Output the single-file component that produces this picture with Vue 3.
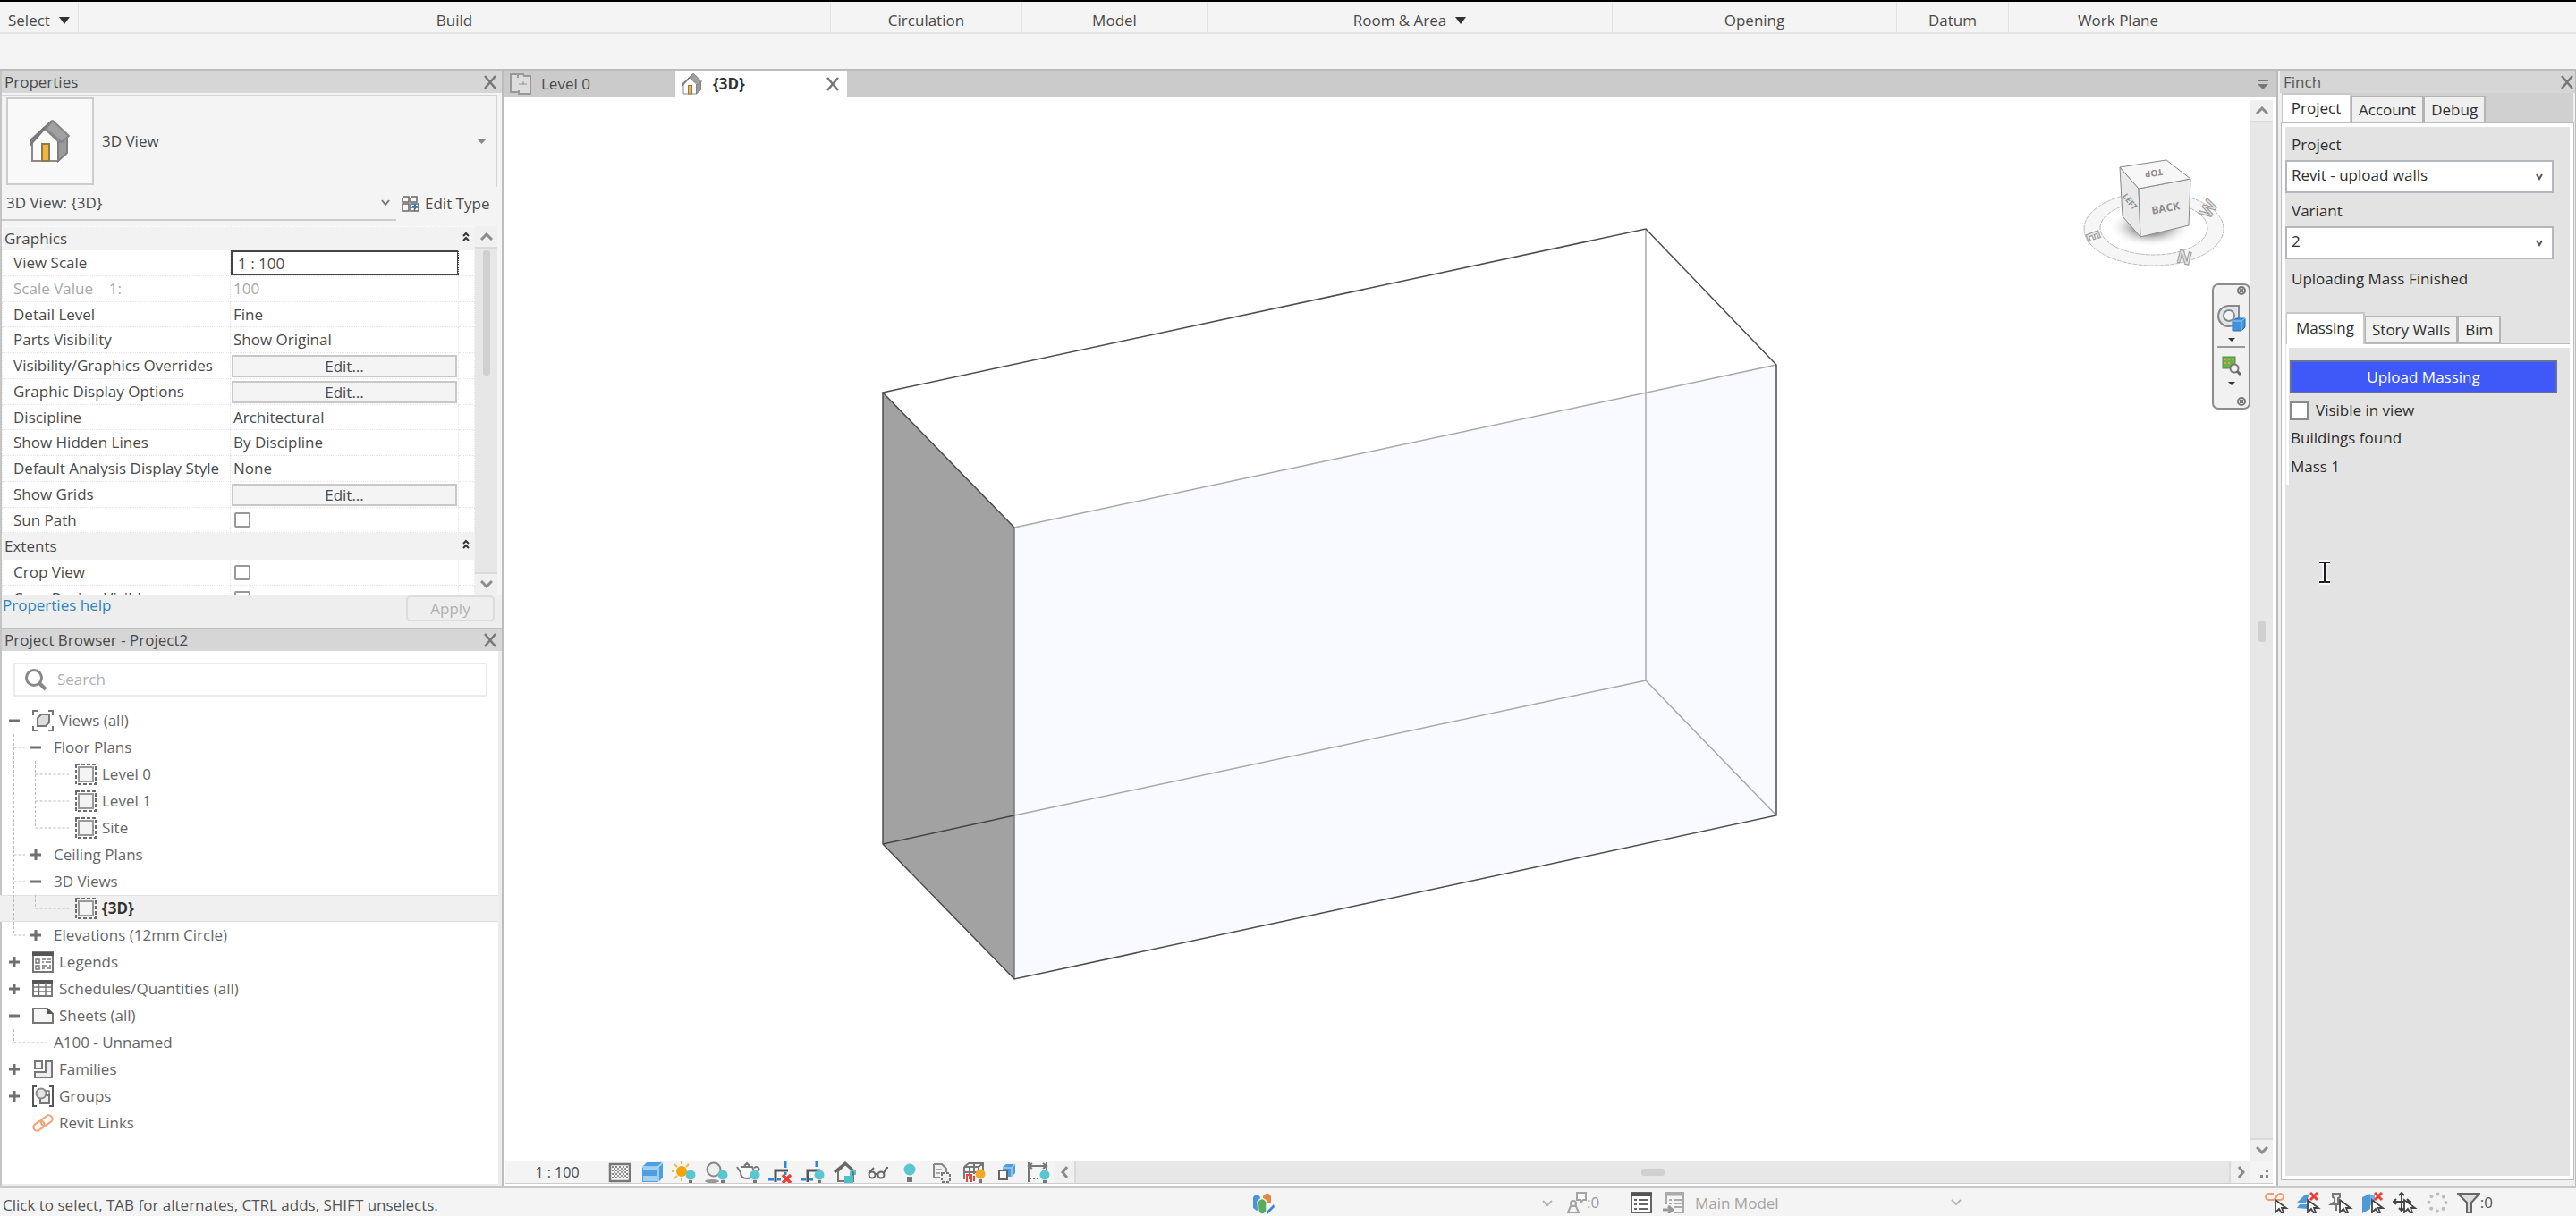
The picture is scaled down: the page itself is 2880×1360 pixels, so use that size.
<script setup>
import { ref } from 'vue'

const ribbon = [
  { name: 'Select', width: 88, menu: true, start: true },
  { name: 'Build', width: 841 },
  { name: 'Circulation', width: 214 },
  { name: 'Model', width: 207 },
  { name: 'Room & Area', width: 453, menu: true },
  { name: 'Opening', width: 318 },
  { name: 'Datum', width: 125 },
  { name: 'Work Plane', width: 244, last: true },
]

const groups = [
  {
    name: 'Graphics',
    rows: [
      { label: 'View Scale', kind: 'field', value: '1 : 100' },
      { label: 'Scale Value    1:', kind: 'text', value: '100', dim: true },
      { label: 'Detail Level', kind: 'text', value: 'Fine' },
      { label: 'Parts Visibility', kind: 'text', value: 'Show Original' },
      { label: 'Visibility/Graphics Overrides', kind: 'button', value: 'Edit...' },
      { label: 'Graphic Display Options', kind: 'button', value: 'Edit...' },
      { label: 'Discipline', kind: 'text', value: 'Architectural' },
      { label: 'Show Hidden Lines', kind: 'text', value: 'By Discipline' },
      { label: 'Default Analysis Display Style', kind: 'text', value: 'None' },
      { label: 'Show Grids', kind: 'button', value: 'Edit...' },
      { label: 'Sun Path', kind: 'check' },
    ],
  },
  {
    name: 'Extents',
    rows: [
      { label: 'Crop View', kind: 'check' },
      { label: 'Crop Region Visible', kind: 'check' },
    ],
  },
]

const HOUSE = '<path d="M3 24v22h29V24L16 9z" fill="#fbfbfb" stroke="#8a8a8a" stroke-width="2"/><path d="M32 26l10-7v18l-10 9z" fill="#9b9b9b" stroke="#808080" stroke-width="2"/><path d="M25 1L1 23v5l15-17z" fill="#8a8a8a" stroke="#777" stroke-width="2"/><path d="M26 1l18 17-8 7L18 10z" fill="#a0a0a0" stroke="#858585" stroke-width="2"/><rect x="14" y="27" width="8" height="19" fill="#f3b33d" stroke="#8d7a4e" stroke-width="2"/>'

const PLAN = '<rect x="1" y="1" width="22" height="22" fill="none" stroke="#6c6c6c" stroke-width="2" stroke-dasharray="4 2"/><rect x="4" y="4" width="16" height="16" fill="#f4f4f4" stroke="#999" stroke-width="2"/>'

const tree = [
  { text: 'Views (all)', indent: 10, toggle: '-', icon: '<path d="M1 6V1h5M18 1h5v5M1 18v5h5M18 23h5v-5" fill="none" stroke="#777" stroke-width="2"/><path d="M6 9l4-4h9v9l-4 4H6z" fill="#ddd" stroke="#777" stroke-width="2"/>' },
  { text: 'Floor Plans', indent: 34, toggle: '-', guide: 'M15.5 0V30M15.5 15H28' },
  { text: 'Level 0', indent: 84, icon: PLAN, guide: 'M15.5 0V30M39.5 0V30M39.5 15H77' },
  { text: 'Level 1', indent: 84, icon: PLAN, guide: 'M15.5 0V30M39.5 0V30M39.5 15H77' },
  { text: 'Site', indent: 84, icon: PLAN, guide: 'M15.5 0V30M39.5 0V15H77' },
  { text: 'Ceiling Plans', indent: 34, toggle: '+', guide: 'M15.5 0V30M15.5 15H28' },
  { text: '3D Views', indent: 34, toggle: '-', guide: 'M15.5 0V30M15.5 15H28' },
  { text: '{3D}', indent: 84, icon: PLAN, guide: 'M15.5 0V30M39.5 0V15H77', selected: true },
  { text: 'Elevations (12mm Circle)', indent: 34, toggle: '+', guide: 'M15.5 0V15H28' },
  { text: 'Legends', indent: 10, toggle: '+', icon: '<rect x="1" y="1" width="22" height="22" fill="#fff" stroke="#777" stroke-width="2"/><path d="M0 3h24" stroke="#555" stroke-width="4"/><path d="M4 9h4v4H4zM4 16h4v4H4z" fill="none" stroke="#777" stroke-width="1.5"/><path d="M11 9h4M17 9h4M11 12h2M15 12h6M11 16h6M19 16h2M11 19h3M16 19h5" stroke="#777" stroke-width="1.5"/>' },
  { text: 'Schedules/Quantities (all)', indent: 10, toggle: '+', icon: '<rect x="1" y="3" width="21" height="17" fill="#fff" stroke="#777" stroke-width="2"/><path d="M0 4h23" stroke="#555" stroke-width="4"/><path d="M1 10h21M1 15h21M7.5 5v15M15 5v15" stroke="#777" stroke-width="1.5"/>' },
  { text: 'Sheets (all)', indent: 10, toggle: '-', icon: '<path d="M1 4h16l6 6v10H1z" fill="#f6f6f6" stroke="#777" stroke-width="2"/><path d="M16 3v7h8z" fill="#555"/>' },
  { text: 'A100 - Unnamed', indent: 60, guide: 'M15.5 0V15H53' },
  { text: 'Families', indent: 10, toggle: '+', icon: '<rect x="3" y="3" width="8" height="8" fill="#f4f4f4" stroke="#777" stroke-width="2"/><path d="M15 3h7v18H3v-6h12z" fill="#eee" stroke="#777" stroke-width="2"/>' },
  { text: 'Groups', indent: 10, toggle: '+', icon: '<path d="M5 1H1v22h4M19 1h4v22h-4" fill="none" stroke="#555" stroke-width="2"/><rect x="9" y="11" width="10" height="9" fill="#eee" stroke="#777" stroke-width="2"/><circle cx="10" cy="9" r="5.5" fill="#e4e4e4" stroke="#888" stroke-width="2"/><path d="M15 6h4v6" stroke="#777" stroke-width="1.5" fill="none"/>' },
  { text: 'Revit Links', indent: 36, icon: '<g fill="none" stroke="#eda77c" stroke-width="2.2" transform="rotate(-35 12 12)"><rect x="0" y="8" width="13" height="8" rx="4"/><rect x="10" y="8" width="14" height="8" rx="4"/></g>' },
]

const BULB = '<circle cx="21" cy="15" r="5.5" fill="#5cc6d0"/><rect x="19" y="21" width="4" height="3" fill="#777"/>'

const viewControls = [
  { name: 'Detail level', art: '<rect x="3" y="3" width="22" height="19" fill="#f4f4f4" stroke="#777" stroke-width="2.5"/><path d="M5 6h18M5 10h18M5 14h18M5 18h18" stroke="#888" stroke-width="2" stroke-dasharray="2 2"/><path d="M7 8h16M7 12h16M7 16h16" stroke="#999" stroke-width="2" stroke-dasharray="2 2"/>' },
  { name: 'Visual style', art: '<path d="M3 6l5-5h18v17l-5 5H3z" fill="#4d9fe0"/><path d="M3 6h18l5-5M21 6v17" stroke="#b8dcf6" fill="none" stroke-width="1.5"/><path d="M4 7h16v3H4zM4 16h16v6H4z" fill="#a4d0f2"/>' },
  { name: 'Sun path', art: '<circle cx="11" cy="11" r="6" fill="#f5a30c"/><g stroke="#f3b652" stroke-width="2"><path d="M11 0v3M11 19v3M0 11h3M3 3l3 3M19 3l-3 3M3 19l3-3"/></g>' + BULB },
  { name: 'Shadows', art: '<ellipse cx="9" cy="22" rx="8" ry="2" fill="#999"/><circle cx="11" cy="9" r="7.5" fill="#eee" stroke="#888" stroke-width="2"/>' + BULB },
  { name: 'Rendering dialog', art: '<path d="M6 6h12l2 5c0 5-3 8-8 8s-7-3-7-7L1 6M20 7c5-3 7 2 4 4M9 5l3-3 3 3" fill="#fafafa" stroke="#777" stroke-width="2"/>' + BULB },
  { name: 'Crop view', art: '<path d="M8 23V10h14" fill="none" stroke="#555" stroke-width="3"/><path d="M19 0v7M19 12v3M0 20h6M10 20h4" stroke="#2f86d8" stroke-width="3"/><path d="M16 15l9 9M25 15l-9 9" stroke="#ee3b33" stroke-width="3.5"/>' },
  { name: 'Crop region', art: '<path d="M8 23V10h14" fill="none" stroke="#555" stroke-width="3"/><path d="M18 0v6M0 20h6M10 20h4" stroke="#2f86d8" stroke-width="3"/>' + BULB },
  { name: 'Lock view', art: '<path d="M6 11v11h17V11l-9-8z" fill="#f4f4f4" stroke="#777" stroke-width="2"/><path d="M2 12L14 2l11 10" fill="none" stroke="#666" stroke-width="3"/><rect x="13" y="16" width="10" height="8" fill="#4fbfca"/><path d="M20 16v-3c0-4 5-4 5 0v2" fill="none" stroke="#4fbfca" stroke-width="2"/>' },
  { name: 'Temporary hide', art: '<g fill="none" stroke="#666" stroke-width="2"><circle cx="8" cy="15" r="3.5"/><circle cx="18" cy="15" r="3.5"/><path d="M4 13l6-6M11 14h4M21 13l3-6h2"/></g>' },
  { name: 'Reveal hidden', art: '<circle cx="14" cy="9" r="6.5" fill="#5cc6d0"/><rect x="11" y="17" width="6" height="6" fill="#777"/>' },
  { name: 'Temporary view properties', art: '<path d="M5 3h9l5 5v4M12 18H5V3" fill="#eee" stroke="#888" stroke-width="2"/><path d="M8 9h6M8 13h4" stroke="#aaa" stroke-width="2"/><path d="M14 13h9v10h-9z" fill="#eee" stroke="#777" stroke-width="2" stroke-dasharray="3 2"/>' },
  { name: 'Analytical model', art: '<path d="M3 6l5-4h16v12M3 6v14M3 6h16l5-4M9 6v14M19 6v9M3 12h18M14 2v12" fill="none" stroke="#777" stroke-width="2"/><path d="M6 23v-8h5v8M14 22v-6" fill="none" stroke="#e8453c" stroke-width="2"/><circle cx="21" cy="14" r="5.5" fill="#f2a62a"/><rect x="19" y="20" width="4" height="4" fill="#777"/>' },
  { name: 'Displacement sets', art: '<path d="M10 6l4-3h10v10l-4 4H10z" fill="#4d9fe0"/><path d="M10 7h10v10M20 7l4-4" stroke="#9fcdf0" stroke-width="1.5" fill="none"/><rect x="6" y="10" width="9" height="10" fill="#fff" stroke="#666" stroke-width="2"/>' },
  { name: 'Reveal constraints', art: '<path d="M3 1v22M23 1v9M3 5h20M7 2L3 5l4 3M19 2l4 3-4 3" fill="none" stroke="#777" stroke-width="2"/><path d="M4 19h11" stroke="#777" stroke-width="2" stroke-dasharray="2 2"/>' + BULB },
]

const ARROW = '<path d="M13 9v14l4-4 3 5 2-1-2-5h5z" fill="#fff" stroke="#444" stroke-width="1.8"/>'
const CROSS = '<path d="M16 1l8 8M24 1l-8 8" stroke="#ee3b33" stroke-width="3"/>'

const selectionTools = [
  { name: 'Select links', art: '<path d="M11 2H6a4 3.5 0 000 7h4c4 0 4-7 8-7a4 3.5 0 010 7h-4" fill="none" stroke="#ee9d6c" stroke-width="2"/>' + ARROW },
  { name: 'Select underlay elements', art: '<path d="M1 12L10 3h5l-4 9zM1 18l3-4h9v5z" fill="#4d9ad6"/>' + CROSS + ARROW },
  { name: 'Select pinned elements', art: '<path d="M4 2h10M5 2v4l2 1v4l-4 3h12l-4-3V7l2-1V2M9 14v7" fill="#eee" stroke="#777" stroke-width="2"/>' + ARROW },
  { name: 'Select elements by face', art: '<path d="M2 6l9-4v17l-9 5z" fill="#4d9ad6"/><path d="M11 3h5v12h-5z" fill="#6cb2e6"/>' + CROSS + ARROW },
  { name: 'Drag elements on selection', art: '<path d="M10 2v18M1 11h18M7 4l3-3 3 3M7 18l3 3 3-3M4 8l-3 3 3 3M16 8l3 3-3 3" fill="none" stroke="#444" stroke-width="2"/>' + ARROW },
  { name: 'Background processes', art: '<circle cx="14" cy="12" r="9.5" fill="none" stroke="#bcbcbc" stroke-width="4" stroke-dasharray="0.1 7.36" stroke-linecap="round"/>' },
]

const finchTabs = ['Project', 'Account', 'Debug']
const massTabs = ['Massing', 'Story Walls', 'Bim']
const project = ref('Revit - upload walls')
const variant = ref('2')
const visible = ref(false)
</script>

<template>
  <div class="app">
    <header class="ribbon">
      <div class="ribbon-panels">
        <div
          v-for="p in ribbon"
          :key="p.name"
          class="ribbon-panel"
          :class="{ start: p.start, last: p.last }"
          :style="{ flexBasis: p.width + 'px' }"
        >
          <span>{{ p.name }}</span>
          <svg v-if="p.menu" class="caret" width="12" height="8" viewBox="0 0 12 8"><path d="M0 0h12L6 8z" fill="#333" /></svg>
        </div>
      </div>
      <div class="options-bar"></div>
    </header>

    <main class="workspace">
      <aside class="left">
        <section class="properties">
          <div class="palette-title">
            <h2>Properties</h2>
            <button class="close" aria-label="Close Properties"><svg width="14" height="16" viewBox="0 0 14 16"><path d="M1 1l12 14M13 1L1 15" /></svg></button>
          </div>
          <button class="type-selector">
            <span class="type-thumb">
              <svg width="46" height="48" viewBox="0 0 46 48" v-html="HOUSE"></svg>
            </span>
            <span class="type-name">3D View</span>
            <svg width="11" height="6" viewBox="0 0 11 6"><path d="M0 0h11L5.5 6z" fill="#888" /></svg>
          </button>
          <div class="instance">
            <div class="instance-pick">
              <select aria-label="Instance"><option>3D View: {3D}</option></select>
              <svg width="10" height="8" viewBox="0 0 10 8"><path d="M1 1l4 5 4-5" fill="none" stroke="#777" stroke-width="2" /></svg>
            </div>
            <button class="edit-type">
              <svg width="20" height="20" viewBox="0 0 20 20"><path d="M2 2h6v6H1V4zM11 2h6v6h-7V4zM1 10h7v8H1zM10 10h9v8h-9zM10 14h9M14.5 10v8" fill="#f8f8f8" stroke="#666" stroke-width="1.5" /><path d="M12 13h6M15 10v6" stroke="#2f7fd0" stroke-width="2" /></svg>
              Edit Type
            </button>
          </div>
          <div class="grid-area">
            <table class="grid">
              <colgroup><col class="c-name" /><col class="c-value" /><col /></colgroup>
              <tbody v-for="g in groups" :key="g.name">
                <tr class="group">
                  <th colspan="2" scope="rowgroup">{{ g.name }}</th>
                  <td><svg width="8" height="11" viewBox="0 0 8 11"><path d="M1 5l3-3 3 3M1 10l3-3 3 3" fill="none" stroke="#333" stroke-width="2" /></svg></td>
                </tr>
                <tr v-for="(r, i) in g.rows" :key="r.label" :class="{ dim: r.dim }">
                  <th scope="row"><label :for="g.name + i">{{ r.label }}</label></th>
                  <td>
                    <input v-if="r.kind === 'field'" :id="g.name + i" class="field" :value="r.value" />
                    <button v-else-if="r.kind === 'button'" :id="g.name + i" class="edit">{{ r.value }}</button>
                    <input v-else-if="r.kind === 'check'" :id="g.name + i" type="checkbox" class="tick" />
                    <output v-else :id="g.name + i">{{ r.value }}</output>
                  </td>
                  <td></td>
                </tr>
              </tbody>
            </table>
            <div class="vbar">
              <span class="vbtn"><svg width="14" height="9" viewBox="0 0 14 9"><path d="M1 8l6-6 6 6" /></svg></span>
              <span class="vtrack"><i class="long"></i></span>
              <span class="vbtn down"><svg width="14" height="9" viewBox="0 0 14 9"><path d="M1 1l6 6 6-6" /></svg></span>
            </div>
          </div>
          <div class="properties-foot">
            <a href="#help">Properties help</a>
            <button class="apply" disabled>Apply</button>
          </div>
        </section>

        <section class="browser">
          <div class="palette-title">
            <h2>Project Browser - Project2</h2>
            <button class="close" aria-label="Close Project Browser"><svg width="14" height="16" viewBox="0 0 14 16"><path d="M1 1l12 14M13 1L1 15" /></svg></button>
          </div>
          <label class="search">
            <svg width="26" height="26" viewBox="0 0 26 26"><circle cx="11" cy="11" r="8.5" fill="none" stroke="#888" stroke-width="3" /><path d="M17 17l7 7" stroke="#888" stroke-width="4" /></svg>
            <input type="search" placeholder="Search" aria-label="Search" />
          </label>
          <ul class="tree">
            <li v-for="n in tree" :key="n.text" :class="{ selected: n.selected }">
              <svg :width="n.indent" height="30" class="guides"><path v-if="n.guide" :d="n.guide" fill="none" stroke="#bbb" stroke-dasharray="3 2" /></svg>
              <svg v-if="n.toggle" class="toggle" width="12" height="12" viewBox="0 0 12 12"><path :d="n.toggle === '+' ? 'M0 6h12M6 0v12' : 'M0 6h12'" stroke="#707070" stroke-width="3" /></svg>
              <svg v-if="n.icon" class="node-icon" width="24" height="24" viewBox="0 0 24 24" v-html="n.icon"></svg>
              <span>{{ n.text }}</span>
            </li>
          </ul>
        </section>
      </aside>

      <section class="center">
        <nav class="doc-tabs">
          <button class="doc-tab">
            <svg width="24" height="24" viewBox="0 0 24 24"><path d="M1 1h8v3h6v17H1z" fill="#ddd" stroke="#999" stroke-width="2" /><path d="M10 1h5l1 2h7v20H10v-4" fill="#ddd" stroke="#999" stroke-width="2" /><path d="M10 12h9M15 9v4" stroke="#999" /></svg>
            <span>Level 0</span>
          </button>
          <div class="doc-tab active">
            <svg width="24" height="24" viewBox="0 0 46 48" v-html="HOUSE"></svg>
            <span>{3D}</span>
            <button class="close" aria-label="Close view"><svg width="14" height="16" viewBox="0 0 14 16"><path d="M1 1l12 14M13 1L1 15" /></svg></button>
          </div>
          <svg class="tab-menu" width="12" height="12" viewBox="0 0 12 12"><path d="M0 1h12" stroke="#777" stroke-width="2" /><path d="M0 5h12l-6 6z" fill="#777" /></svg>
        </nav>

        <div class="view-row">
          <div class="canvas">
            <svg class="model" viewBox="563 109 1953 1189">
              <path d="M987 439L1840 256 1986 408 1134 590z" fill="#fff" />
              <path d="M1134 590L1986 408V912L1134 1095z" fill="#f8faff" />
              <path d="M987 439L1134 590V1095L987 944z" fill="#a2a2a3" />
              <path d="M1134 590L1986 408M1840 256V761L1986 912M1840 761L1134 912" fill="none" stroke="#a9a9a9" stroke-width="1.5" />
              <path d="M1134 590V1095" stroke="#777" stroke-width="1.5" />
              <path d="M1134 912L987 944" stroke="#444" stroke-width="1.5" />
              <path d="M1134 590L987 439 1840 256 1986 408V912L1134 1095 987 944V439" fill="none" stroke="#4c4c4c" stroke-width="1.5" />
            </svg>

            <svg class="cube" width="172" height="130" viewBox="2320 176 172 130">
              <defs>
                <radialGradient id="cube-shade"><stop offset="0.4" stop-color="#777" stop-opacity="0.7" /><stop offset="1" stop-color="#fff" stop-opacity="0" /></radialGradient>
              </defs>
              <path d="M2330 256a78 41 0 10156 0a78 41 0 10-156 0zM2348 255a60 30 0 11120 0a60 30 0 11-120 0z" fill="#f6f6f6" fill-rule="evenodd" stroke="#bbb" stroke-dasharray="5 1" />
              <ellipse cx="2404" cy="254" rx="46" ry="22" fill="url(#cube-shade)" />
              <path d="M2370 187L2391 211 2393 265 2373 242z" fill="#e9e9e9" stroke="#888" />
              <path d="M2391 211L2449 200 2447 252 2393 265z" fill="#ededed" stroke="#888" />
              <path d="M2370 187L2422 179 2449 200 2391 211z" fill="#f7f7f7" stroke="#888" />
              <g font-weight="700" fill="#8c8c8c" text-anchor="middle">
                <text x="2421" y="237" font-size="12" transform="rotate(-10 2421 232)">BACK</text>
                <text x="2408" y="198" font-size="10" transform="rotate(172 2408 194)">TOP</text>
                <text x="2382" y="229" font-size="9" transform="rotate(52 2382 225)">LEFT</text>
              </g>
              <g font-weight="700" fill="#e4e4e4" stroke="#999" font-size="20" text-anchor="middle">
                <text x="2442" y="295" transform="rotate(14 2442 288)">N</text>
                <text x="2470" y="240" transform="rotate(-60 2470 234)">W</text>
                <text x="2340" y="271" transform="rotate(70 2340 264)">E</text>
              </g>
            </svg>

            <div class="navbar">
              <svg class="nav-dot" width="10" height="10" viewBox="0 0 10 10"><circle cx="5" cy="5" r="4" /><path d="M3 3l4 4M7 3L3 7" /></svg>
              <button aria-label="Steering wheel">
                <svg width="32" height="30" viewBox="0 0 32 30"><path d="M13 1h11v12a11.5 11.5 0 11-11-12z" fill="#dfe5ea" stroke="#888" stroke-width="2" /><circle cx="13" cy="12" r="6" fill="#f4f4f4" stroke="#888" stroke-width="2" /><path d="M17 18l4-3h10v10l-4 4H17z" fill="#3f92dc" stroke="#2b6fb4" /><path d="M17 18h10v11M27 18l4-3" stroke="#9fd0f5" fill="none" /></svg>
              </button>
              <svg class="mini" width="8" height="4" viewBox="0 0 8 4"><path d="M0 0h8L4 4z" fill="#333" /></svg>
              <hr />
              <button aria-label="Zoom region">
                <svg width="22" height="22" viewBox="0 0 22 22"><rect x="1" y="1" width="14" height="13" fill="#6fb04e" stroke="#4d9148" /><path d="M3 4h10M3 8h8" stroke="#d8a84a" stroke-width="2" stroke-dasharray="2 2" /><circle cx="14" cy="14" r="4.5" fill="#eef3f6" stroke="#777" stroke-width="2" /><path d="M17 17l4 4" stroke="#666" stroke-width="3" /></svg>
              </button>
              <svg class="mini" width="8" height="4" viewBox="0 0 8 4"><path d="M0 0h8L4 4z" fill="#333" /></svg>
              <svg class="nav-dot end" width="10" height="10" viewBox="0 0 10 10"><circle cx="5" cy="5" r="4" /><path d="M3 4h4M3 6h4" /></svg>
            </div>
          </div>
          <div class="vbar">
            <span class="vbtn"><svg width="14" height="9" viewBox="0 0 14 9"><path d="M1 8l6-6 6 6" /></svg></span>
            <span class="vtrack mid"><i></i></span>
            <span class="vbtn down"><svg width="14" height="9" viewBox="0 0 14 9"><path d="M1 1l6 6 6-6" /></svg></span>
          </div>
        </div>

        <div class="view-bar">
          <button class="scale">1 : 100</button>
          <button v-for="c in viewControls" :key="c.name" class="vc" :aria-label="c.name"><svg width="28" height="24" viewBox="0 0 28 24" v-html="c.art"></svg></button>
          <div class="hbar">
            <span class="hbtn"><svg width="9" height="14" viewBox="0 0 9 14"><path d="M7 1L2 7l5 6" /></svg></span>
            <span class="htrack"><i></i></span>
            <span class="hbtn right"><svg width="9" height="14" viewBox="0 0 9 14"><path d="M2 1l5 6-5 6" /></svg></span>
          </div>
          <svg class="grip" width="25" height="25" viewBox="0 0 25 25"><path d="M17 10h3v3h-3zM17 16h3v3h-3zM11 16h3v3h-3z" fill="#888" /></svg>
        </div>
      </section>

      <aside class="finch">
        <div class="palette-title">
          <h2>Finch</h2>
          <button class="close" aria-label="Close Finch"><svg width="14" height="16" viewBox="0 0 14 16"><path d="M1 1l12 14M13 1L1 15" /></svg></button>
        </div>
        <div class="tabs outer">
          <button v-for="(t, i) in finchTabs" :key="t" :class="{ on: i === 0 }">{{ t }}</button>
        </div>
        <div class="finch-body">
          <label class="caption" for="project">Project</label>
          <div class="combo">
            <select id="project" v-model="project"><option>Revit - upload walls</option></select>
            <svg width="8" height="8" viewBox="0 0 8 8"><path d="M1 1l3 5 3-5" fill="none" stroke="#555" stroke-width="2" /></svg>
          </div>
          <label class="caption" for="variant">Variant</label>
          <div class="combo">
            <select id="variant" v-model="variant"><option>2</option></select>
            <svg width="8" height="8" viewBox="0 0 8 8"><path d="M1 1l3 5 3-5" fill="none" stroke="#555" stroke-width="2" /></svg>
          </div>
          <p class="status-text">Uploading Mass Finished</p>
          <div class="tabs inner">
            <button v-for="(t, i) in massTabs" :key="t" :class="{ on: i === 0 }">{{ t }}</button>
          </div>
          <div class="massing">
            <button class="upload">Upload Massing</button>
            <label class="visible"><input v-model="visible" type="checkbox" class="box" /> Visible in view</label>
            <p>Buildings found</p>
            <p>Mass 1</p>
          </div>
          <svg class="ibeam" width="16" height="30" viewBox="0 0 16 30"><path d="M2 4h5l1 1 1-1h5M8 5v20M2 26h5l1-1 1 1h5" fill="none" stroke="#fff" stroke-width="5" /><path d="M2 4h5l1 1 1-1h5M8 5v20M2 26h5l1-1 1 1h5" fill="none" stroke="#1b1b28" stroke-width="2" /></svg>
        </div>
      </aside>
    </main>

    <footer class="status">
      <p class="hint">Click to select, TAB for alternates, CTRL adds, SHIFT unselects.</p>
      <div class="workset">
        <svg width="26" height="24" viewBox="0 0 26 24"><path d="M1 5q4-6 8 0v13l-4 2-4-3z" fill="#4d94d6" /><path d="M12 4q5-7 9 0v8h-9z" fill="#e08a44" /><path d="M17 20l7-7 1 3-9 9z" fill="#3b86cf" /><path d="M6 10q5-7 10 0v11q-5 6-9 0z" fill="#58ad5c" stroke="#e8f0e8" stroke-width="1.5" /></svg>
        <svg class="chev" width="12" height="8" viewBox="0 0 12 8"><path d="M1 1l5 5 5-5" /></svg>
      </div>
      <div class="requests">
        <svg width="22" height="24" viewBox="0 0 22 24"><path d="M11 1h10v8h-3l-3 3V9h-4z" fill="#f8f8f8" stroke="#a4a4a4" stroke-width="2" /><circle cx="7" cy="13" r="3" fill="none" stroke="#a4a4a4" stroke-width="2" /><path d="M1 23l3-7h6l3 7z" fill="none" stroke="#a4a4a4" stroke-width="2" /></svg>
        <span>:0</span>
      </div>
      <div class="design">
        <svg width="24" height="24" viewBox="0 0 24 24"><rect x="1" y="1" width="22" height="22" fill="#fff" stroke="#666" stroke-width="2" /><path d="M0 3h24" stroke="#555" stroke-width="4" /><path d="M4 9h3M4 14h3M4 19h3M9 9h11M9 14h11M9 19h11" stroke="#666" stroke-width="2" /></svg>
        <svg width="24" height="24" viewBox="0 0 24 24"><path d="M4 14V1h19v22H12" fill="#f4f4f4" stroke="#aaa" stroke-width="2" /><path d="M3 3h21" stroke="#aaa" stroke-width="3" /><path d="M7 9h3M7 13h3M12 9h9M12 13h9M12 17h9" stroke="#aaa" stroke-width="2" /><path d="M0 20h8M6 16l5 4-5 4" stroke="#999" stroke-width="3" fill="none" /></svg>
        <label class="option"><select aria-label="Design option" disabled><option>Main Model</option></select>
          <svg class="chev" width="12" height="8" viewBox="0 0 12 8"><path d="M1 1l5 5 5-5" /></svg></label>
      </div>
      <div class="tools">
        <button v-for="t in selectionTools" :key="t.name" :aria-label="t.name"><svg width="28" height="24" viewBox="0 0 28 24" v-html="t.art"></svg></button>
        <button class="filter" aria-label="Filter"><svg width="26" height="24" viewBox="0 0 26 24"><path d="M1 2h24L16 12v11h-5V12z" fill="#ddd" stroke="#666" stroke-width="2" /></svg><span>:0</span></button>
      </div>
    </footer>
  </div>
</template>

<style>
body {
  margin: 0;
}
</style>

<style scoped>
.app {
  display: flex;
  flex-direction: column;
  min-height: 100vh;
  background: #f4f4f4;
  color: #4a4a4a;
  font: 17px/24px "Open Sans", "Noto Sans", sans-serif;
}
*, *::before, *::after { box-sizing: border-box; }
h2, p, ul { margin: 0; padding: 0; font-size: inherit; font-weight: 400; list-style: none; }
button, input, select {
  margin: 0; padding: 0; border: 0; border-radius: 0; background: none;
  color: inherit; font: inherit; appearance: none;
}
svg { display: block; flex: none; }

.ribbon { border-top: 2px solid #000; border-bottom: 2px solid #bcbcbc; }
.ribbon-panels { display: flex; height: 36px; border-bottom: 2px solid #e4e4e4; }
.ribbon-panel {
  display: flex; flex: 0 1 auto; align-items: center; justify-content: center; gap: 10px;
  padding-top: 8px; border-right: 1px solid #e2e2e2;
}
.ribbon-panel.start { justify-content: flex-start; padding-left: 9px; }
.ribbon-panel.last { border-right: 0; }
.options-bar { height: 39px; }

.workspace { display: flex; flex: 1; border-bottom: 2px solid #c8c8c8; }

.palette-title {
  display: flex; align-items: center; justify-content: space-between;
  height: 25px; padding: 0 5px; background: #d6d6d6;
}
.close path { fill: none; stroke: #777; stroke-width: 2.5; }

.left {
  display: flex; flex: none; flex-direction: column; width: 563px;
  border-left: 2px solid #c4c4c4; border-right: 2px solid #bdbdbd; background: #f4f4f4;
}
.left .palette-title { padding: 0 6px 0 3px; }
.properties { border-bottom: 1px solid #c0c0c0; }
.type-selector {
  display: flex; align-items: center; width: 554px; height: 103px; margin-top: 2px; padding: 0 11px 0 5px;
  border: solid #d4d4d4; border-width: 1px 1px 0 0; text-align: left;
}
.type-thumb {
  display: grid; place-items: center; width: 98px; height: 98px;
  border: 2px solid #ccc; background: #f9f9f9;
}
.type-name { flex: 1; padding-left: 9px; }
.instance { display: flex; gap: 6px; height: 44px; }
.instance-pick {
  display: flex; align-items: center; width: 441px; height: 38px; padding: 0 7px 0 5px;
  border-bottom: 2px solid #ccc;
}
.instance-pick select { flex: 1; height: 36px; }
.edit-type { display: flex; align-items: center; gap: 6px; height: 38px; }

.grid-area { display: flex; height: 412px; overflow: hidden; }
.grid {
  width: 529px; flex: none; align-self: flex-start; border-collapse: collapse;
  table-layout: fixed; background: #fff;
}
.c-name, .c-value { width: 255px; }
.grid tr { height: 29px; }
.grid tr:nth-child(4n) { height: 28px; }
.grid .group { height: 26px; background: #f2f2f2; }
.grid tbody + tbody .group { height: 30px; }
.grid th, .grid td { padding: 0; border: 1px dotted #e6e6e6; line-height: 24px; text-align: left; font-weight: 400; white-space: pre; }
.grid .group th { padding-left: 2px; border-color: #f2f2f2; }
.grid .group td { border-color: #f2f2f2; vertical-align: middle; }
.grid .group svg { margin: 0 0 4px 4px; }
.grid th { padding-left: 12px; }
.grid output { padding-left: 3px; }
.dim { color: #a8a8a8; }
.field { display: block; width: 255px; height: 28px; padding-left: 6px; border: 2px solid #444; background: #fff; }
.edit { display: block; width: 252px; height: 25px; margin: 1px auto 0; border: 2px solid #c8c8c8; background: #f4f4f4; line-height: 20px; }
.tick { display: block; width: 18px; height: 17px; margin-left: 4px; border: 2px solid #999; border-radius: 2px; background: #fff; }

.vbar { display: flex; flex: none; flex-direction: column; width: 25px; background: #e7e7e7; }
.vbtn, .hbtn { display: grid; place-items: center; flex: none; background: #f0f0f0; }
.vbtn { height: 25px; border-bottom: 2px solid #dadada; }
.vbtn.down { border-top: 2px solid #dadada; border-bottom: 0; }
.vbtn path, .hbtn path { fill: none; stroke: #8c8c8c; stroke-width: 3; }
.vtrack { display: flex; flex: 1; justify-content: center; padding-top: 2px; }
.vtrack.mid { align-items: center; }
.vtrack i { width: 8px; height: 24px; border-radius: 3px; background: #d0d0d0; }
.vtrack .long { height: 140px; }

.properties-foot { display: flex; justify-content: space-between; height: 37px; padding: 1px 8px 0 1px; background: #eee; }
.properties-foot a { color: #2d86bd; line-height: 22px; text-decoration: underline; }
.apply { width: 99px; height: 29px; border: 2px solid #dcdcdc; border-radius: 5px; color: #b0b0b0; }

.browser { display: flex; flex: 1; flex-direction: column; border: solid #ececec; border-width: 0 4px 3px 0; background: #fff; }
.browser .palette-title { margin-right: -4px; }
.search { display: flex; align-items: center; gap: 11px; height: 38px; margin: 13px 12px 12px 13px; padding-left: 10px; border: 2px solid #ebebeb; }
.search input { flex: 1; }
.search input::placeholder { color: #b0b0b0; opacity: 1; }
.tree { padding-bottom: 40px; color: #666; }
.tree li { display: flex; align-items: center; height: 30px; margin-left: -2px; }
.tree .selected { background: #f0f0f0; box-shadow: inset 0 1px #e2e2e2, inset 0 -1px #e2e2e2; color: #333; font-weight: 700; }
.toggle { margin-right: 14px; }
.node-icon { margin-right: 6px; }

.center { display: flex; flex: 1; flex-direction: column; min-width: 0; background: #fff; border-right: 2px solid #bbb; }
.doc-tabs { display: flex; height: 30px; background: #cbcbcb; }
.doc-tab { display: flex; align-items: center; gap: 11px; width: 192px; padding: 0 9px 0 7px; text-align: left; }
.doc-tab.active { background: #fff; color: #333; font-weight: 700; }
.doc-tab.active span { flex: 1; }
.tab-menu { align-self: center; margin: 2px 9px 0 auto; }
.view-row { display: flex; flex: 1; padding-right: 4px; }
.canvas { position: relative; flex: 1; min-width: 0; }
.view-row .vbar { margin-top: 3px; }
.model { position: absolute; inset: 0; width: 100%; height: 100%; }
.cube { position: absolute; top: 67px; right: 24px; }
.navbar {
  position: absolute; top: 208px; right: 0; display: flex; flex-direction: column; align-items: center;
  width: 43px; height: 141px; border: 2px solid #8c8c8c; border-radius: 7px; background: #f1f1f1;
}
.nav-dot { align-self: flex-end; margin: 1px 3px 11px 0; }
.nav-dot.end { margin: auto 3px 2px 0; }
.nav-dot circle, .nav-dot path { fill: none; stroke: #777; stroke-width: 2; }
.navbar .mini { margin: 7px 0 5px; }
.navbar hr { width: 31px; margin: 0 0 9px; border: 0; border-top: 2px solid #999; }

.view-bar { display: flex; height: 26px; margin: 0 4px 3px 2px; border-bottom: 1px solid #ccc; background: #f4f4f4; }
.scale { width: 110px; padding-left: 6px; font-size: 16px; }
.vc { display: grid; place-items: center; width: 36px; height: 25px; }
.hbar { display: flex; flex: 1; background: #e7e7e7; }
.hbtn { width: 24px; border-right: 2px solid #dadada; }
.hbtn.right { border-left: 2px solid #dadada; border-right: 0; }
.htrack { display: flex; flex: 1; align-items: center; justify-content: center; }
.htrack i { width: 26px; height: 8px; border-radius: 3px; background: #d0d0d0; }

.finch { position: relative; display: flex; flex: none; flex-direction: column; width: 333px; padding: 0 2px 8px 4px; border-right: 1px solid #bbb; background: #f0f0f0; color: #2e2e2e; }
.finch .palette-title { margin: 0 -2px; padding: 0 2px 0 4px; color: #555; }
.tabs { display: flex; align-items: flex-end; }
.tabs button { height: 31px; padding: 0 7px; border: 2px solid #b4b4b4; border-bottom-width: 1px; border-left-width: 1px; background: #f0f0f0; line-height: 26px; }
.tabs .on { padding-bottom: 3px; border-bottom: 0; border-color: #c8c8c8; background: #fff; }
.outer { height: 34px; background: #d0d0d0; }
.outer .on { width: 78px; height: 34px; }
.finch-body { flex: 1; padding: 8px 18px 20px 0; border: 4px solid #fff; background: #e3e3e3; outline: 1px solid #bbb; }
.caption { display: block; height: 29px; padding: 0 7px; }
.combo { position: relative; display: flex; align-items: center; height: 37px; margin-bottom: 8px; border: 2px solid #b4b8bc; background: #fff; }
.combo select { width: 100%; height: 33px; padding: 0 5px 3px; line-height: 30px; }
.combo svg { position: absolute; right: 10px; pointer-events: none; }
.status-text { padding: 2px 7px 25px; }
.inner { margin: 0 -18px 0 1px; border-bottom: 1px solid #bbb; }
.inner .on { width: 88px; height: 36px; margin-bottom: -1px; }
.massing { margin: 0 -18px 0 1px; padding: 14px 14px 0 1px; border: solid #fff; border-width: 4px 0 0 3px; }
.massing p { height: 32px; padding-left: 1px; }
.upload { display: block; width: 100%; height: 37px; border: 2px solid #65709c; background: #3e59f8; color: #fff; }
.visible { display: flex; align-items: center; gap: 8px; height: 38px; }
.box { width: 21px; height: 21px; border: 2px solid #8a8a8a; background: #fff; }
.ibeam { position: absolute; top: 546px; left: 44px; }

.status { display: flex; align-items: center; height: 31px; color: #555; }
.hint { width: 1400px; padding: 6px 0 0 3px; }
.workset, .requests, .design, .tools, .option { display: flex; align-items: center; }
.workset { justify-content: space-between; width: 336px; padding-top: 2px; }
.chev path { fill: none; stroke: #b4b4b4; stroke-width: 2; }
.requests { width: 87px; padding-left: 16px; color: #999; }
.design { gap: 12px; flex: none; }
.option { width: 298px; }
.option select { flex: 1; padding-top: 3px; color: #a4a4a4; opacity: 1; }
.tools { margin-left: auto; padding-right: 93px; }
.tools button { display: grid; place-items: center; width: 36px; height: 28px; }
.tools .filter { display: flex; align-items: center; width: auto; margin-left: 4px; }
</style>
